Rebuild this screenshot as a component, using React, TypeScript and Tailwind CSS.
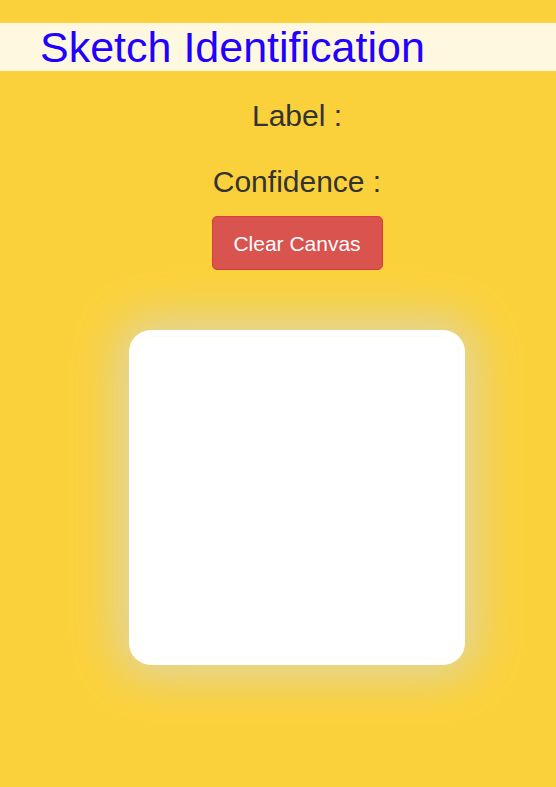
export default function App() {
  return (
    <div
      className="min-h-[787px] w-full bg-[#fbd13b] pt-[23px] flex flex-col"
      style={{ fontFamily: '"Liberation Sans", Arial, sans-serif' }}
    >
      <div className="bg-[#fff8e0] h-[48px] flex items-center pl-[40px]">
        <h1 className="text-[43px] leading-[48px] text-[#2200ff] font-normal">Sketch Identification</h1>
      </div>
      <div className="flex flex-col items-center pl-[38px]">
        <p className="mt-[28px] text-[30px] leading-[34px] text-[#333333]">Label :</p>
        <p className="mt-[32px] text-[30px] leading-[34px] text-[#333333]">Confidence :</p>
        <button className="mt-[17px] w-[171px] h-[54px] bg-[#d9534f] border border-[#d43f3a] rounded-[5px] text-white text-[21px] leading-none">
          Clear Canvas
        </button>
        <div className="mt-[60px] w-[336px] h-[335px] bg-white rounded-[22px] shadow-[0_0_45px_12px_rgba(215,215,200,0.75)] p-[6px]">
          <div className="w-full h-full rounded-[18px] border border-[#fffcef]"></div>
        </div>
      </div>
    </div>
  );
}
